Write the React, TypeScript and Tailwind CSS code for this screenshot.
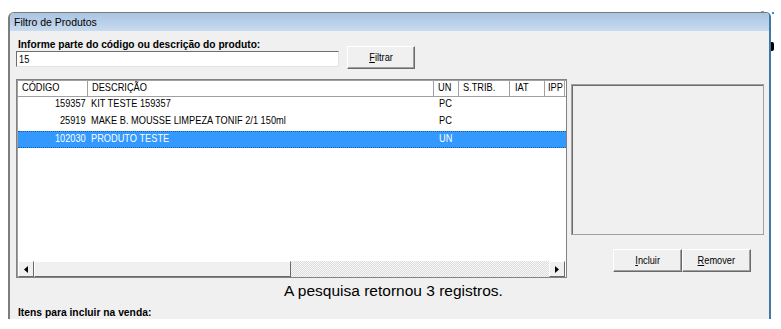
import React from "react";

function N({ children, right }: { children: React.ReactNode; right?: boolean }) {
  return (
    <span className={"inline-block whitespace-nowrap scale-x-[0.84] " + (right ? "origin-right" : "origin-left")}>
      {children}
    </span>
  );
}

function NC({ children }: { children: React.ReactNode }) {
  return <span className="inline-block whitespace-nowrap scale-x-[0.84] origin-center">{children}</span>;
}

function U({ c, rest }: { c: string; rest: string }) {
  return (
    <NC>
      <span className="underline underline-offset-[1px]">{c}</span>
      {rest}
    </NC>
  );
}

const cols = [
  { w: 70, label: "CÓDIGO", pl: 4 },
  { w: 346, label: "DESCRIÇÃO", pl: 4 },
  { w: 25, label: "UN", pl: 4 },
  { w: 51, label: "S.TRIB.", pl: 4 },
  { w: 35, label: "IAT", pl: 5 },
  { w: 20, label: "IPP", pl: 3 },
];

const rows = [
  { code: "159357", desc: "KIT TESTE 159357", un: "PC", sel: false },
  { code: "25919", desc: "MAKE B. MOUSSE LIMPEZA TONIF 2/1 150ml", un: "PC", sel: false },
  { code: "102030", desc: "PRODUTO TESTE", un: "UN", sel: true },
];

function Btn({ children, className }: { children: React.ReactNode; className: string }) {
  return (
    <div
      className={
        "flex items-center justify-center bg-[#f0f0f0] border border-t-white border-l-white border-r-[#6a6a6a] border-b-[#6a6a6a] shadow-[inset_-1px_-1px_0_#a0a0a0] text-[11px] text-black " +
        className
      }
    >
      {children}
    </div>
  );
}

export default function App() {
  return (
    <div
      className="w-[781px] h-[329px] bg-white relative overflow-hidden"
      style={{ fontFamily: '"Liberation Sans", Arial, sans-serif' }}
    >
      <div className="absolute left-[771px] top-[42px] w-[3px] h-[9px] bg-black rounded-r-[2px]" />
      <div className="absolute left-[761px] top-[11px] w-[3px] h-[1px] bg-[#6aa0d0]" />
      <div className="absolute left-[772px] top-[12px] w-[2px] h-[2px] bg-[#3c8ad0]" />
      <div className="ml-[8px] mt-[12px] w-[763px] h-[307px] flex flex-col border-t border-t-[#7a7a7a] border-l-2 border-l-[#7d7d7d] border-r-2 border-r-[#3f77a8] rounded-tl-[6px] rounded-tr-[5px] overflow-hidden">
        <div className="h-[19px] bg-gradient-to-b from-[#aac4e1] to-[#c9dbef] flex items-center pl-[4px] pt-[1px] text-[10.5px] text-black">
          Filtro de Produtos
        </div>
        <div className="flex-1 bg-[#f0f0f0] flex flex-col">
          <div className="flex items-start mt-[7px]">
            <div className="flex flex-col pl-[6px]">
              <div className="pl-[2px] h-[13px] leading-[13px] text-[10.2px] font-bold text-black">
                Informe parte do código ou descrição do produto:
              </div>
              <div className="w-[323px] h-[16px] bg-white border border-t-[#6e6e6e] border-l-[#6e6e6e] border-r-[#e3e3e3] border-b-[#e3e3e3] pl-[2px] text-[11px] leading-[14px] text-black">
                <N>15</N>
              </div>
            </div>
            <Btn className="ml-[8px] mt-[8px] w-[68px] h-[23px]">
              <U c="F" rest="iltrar" />
            </Btn>
          </div>

          <div className="flex mt-[10px]">
            <div className="ml-[6px] w-[551px] h-[199px] bg-white border border-[#828282] shadow-[inset_1px_1px_0_#a0a0a0] flex flex-col overflow-hidden">
              <div className="flex h-[17px] border-b border-[#a0a0a0] ml-[1px] shrink-0">
                {cols.map((c, i) => (
                  <div
                    key={i}
                    className="h-full border-r border-[#a0a0a0] text-[11px] leading-[15px] text-black whitespace-nowrap overflow-hidden shrink-0"
                    style={{ width: c.w, paddingLeft: c.pl }}
                  >
                    <N>{c.label}</N>
                  </div>
                ))}
              </div>
              <div className="flex-1 flex flex-col ml-[1px]">
                {rows.map((r, i) => (
                  <div
                    key={i}
                    className={
                      "flex h-[17px] text-[11px] leading-[13px] whitespace-nowrap " +
                      (r.sel ? "bg-[#3399ff] text-white border-y border-dotted border-[#1b5fa8]" : "text-black")
                    }
                  >
                    <div className="w-[70px] text-right pr-[2px] shrink-0">
                      <N right>{r.code}</N>
                    </div>
                    <div className="w-[346px] pl-[3px] shrink-0">
                      <N>{r.desc}</N>
                    </div>
                    <div className="w-[25px] pl-[5px] shrink-0">
                      <N>{r.un}</N>
                    </div>
                  </div>
                ))}
              </div>
              <div className="flex h-[16px] ml-[1px] shrink-0">
                <div className="w-[16px] h-full bg-[#f0f0f0] border border-t-white border-l-white border-r-[#6a6a6a] border-b-[#6a6a6a] flex items-center justify-center">
                  <svg width="4" height="7" viewBox="0 0 4 7"><path d="M4 0 L0 3.5 L4 7 Z" fill="#000" /></svg>
                </div>
                <div className="w-[257px] h-full bg-[#f0f0f0] border border-t-white border-l-white border-r-[#6a6a6a] border-b-[#6a6a6a]" />
                <div className="w-[258px] h-full bg-[repeating-conic-gradient(#dcdcdc_0%_25%,#f8f8f8_0%_50%)] bg-[length:2px_2px]" />
                <div className="w-[16px] h-full bg-[#f0f0f0] border border-t-white border-l-white border-r-[#6a6a6a] border-b-[#6a6a6a] flex items-center justify-center">
                  <svg width="4" height="7" viewBox="0 0 4 7"><path d="M0 0 L4 3.5 L0 7 Z" fill="#000" /></svg>
                </div>
              </div>
            </div>

            <div className="ml-[4px] w-[193px] flex flex-col">
              <div className="mt-[5px] h-[151px] border border-[#a0a0a0] shadow-[inset_1px_1px_0_#6e6e6e] bg-[#f0f0f0]" />
              <div className="flex mt-[14px] pl-[42px]">
                <Btn className="w-[69px] h-[23px]">
                  <U c="I" rest="ncluir" />
                </Btn>
                <Btn className="w-[69px] h-[23px]">
                  <U c="R" rest="emover" />
                </Btn>
              </div>
            </div>
          </div>

          <div className="mt-[4px] h-[18px] leading-[18px] text-[15.5px] text-black text-center pl-[8px]">
            A pesquisa retornou 3 registros.
          </div>
          <div className="mt-[6px] pl-[8px] h-[13px] leading-[13px] text-[10.3px] font-bold text-black">
            Itens para incluir na venda:
          </div>
        </div>
      </div>
    </div>
  );
}
